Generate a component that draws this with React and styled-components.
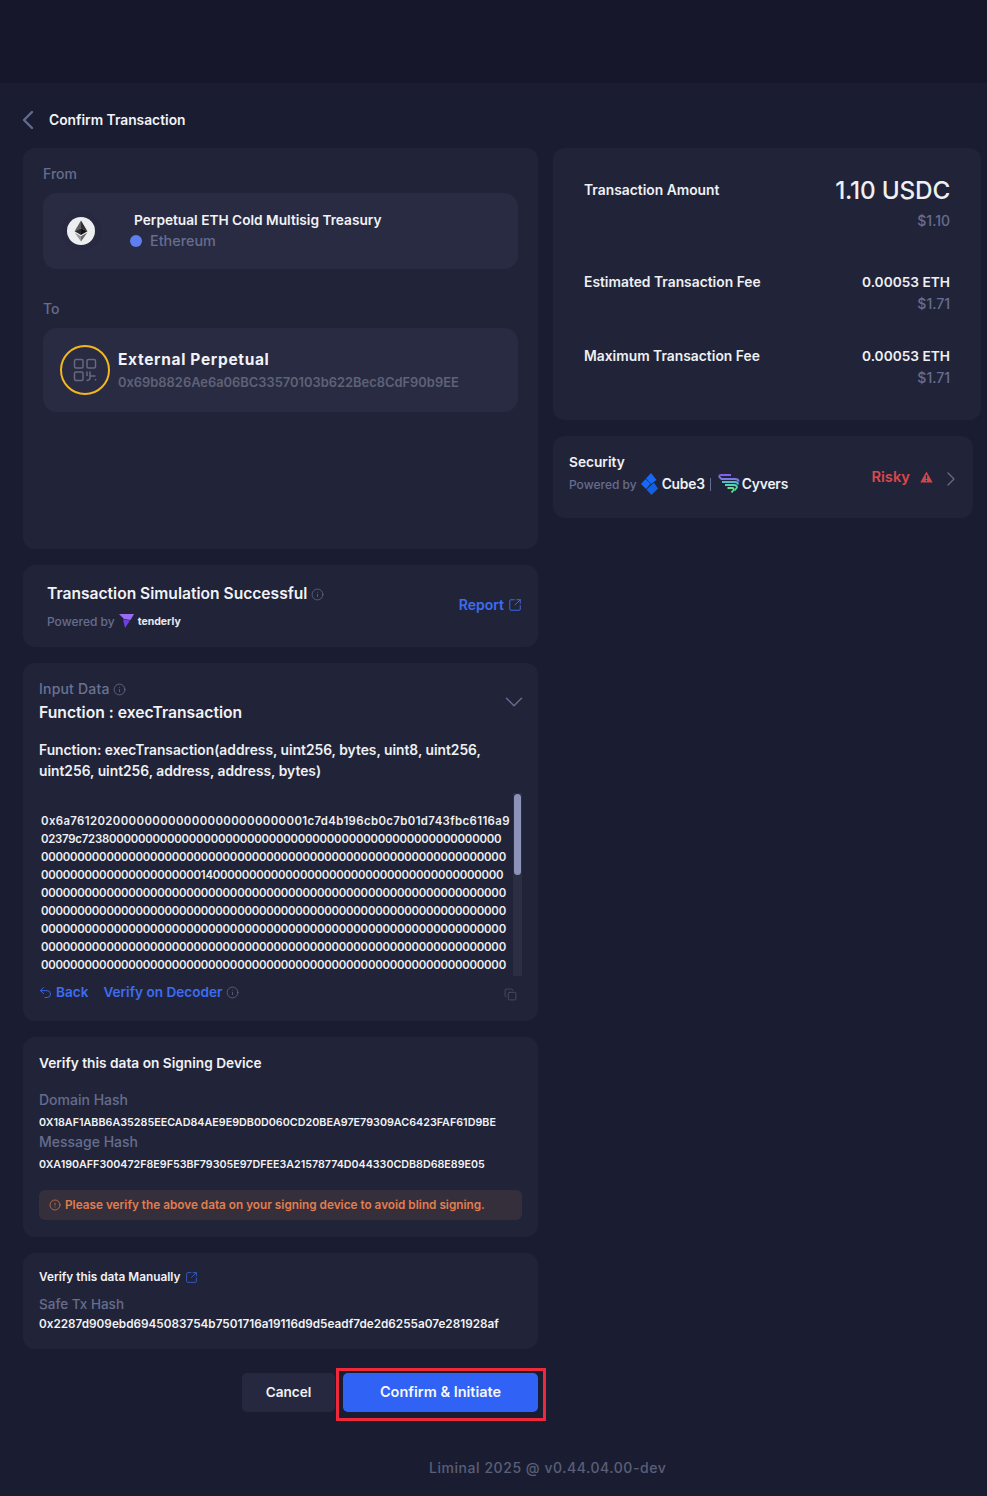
import React from 'react'
import styled, { createGlobalStyle } from 'styled-components'
import { ChevronLeft, ChevronDown, ChevronRight, Info, SquareArrowOutUpRight, Undo2, Copy, CircleAlert } from 'lucide-react'

const GlobalStyle = createGlobalStyle`
  * { box-sizing: border-box; }
  html, body { margin: 0; padding: 0; background: #1a1d31; }
  body { font-family: Inter, "Noto Sans", sans-serif; color: #f1f2f5; }
`

const Page = styled.div`
  width: 987px;
  height: 1496px;
  overflow: hidden;
  background: #1a1d31;
`

const TopBar = styled.div`
  height: 83px;
  background: #16172a;
`

const Header = styled.div`
  height: 65px;
  padding: 21px 0 0 12px;
  display: flex;
  align-items: flex-start;
  gap: 5px;
  font-size: 13.8px;
  font-weight: 600;
  line-height: 32px;
  color: #f2f3f6;
  svg { color: #646c8e; }
`

const Main = styled.div`
  display: flex;
  align-items: flex-start;
  gap: 15px;
  padding-left: 23px;
`

const LeftColumn = styled.div`
  width: 515px;
  display: flex;
  flex-direction: column;
  gap: 16px;
`

const RightColumn = styled.div`
  width: 428px;
  display: flex;
  flex-direction: column;
  gap: 16px;
`

const Card = styled.section`
  background: #212439;
  border-radius: 12px;
  height: ${p => p.$h}px;
  padding: ${p => p.$pad || '0 16px'};
`

const FieldLabel = styled.div`
  font-size: ${p => p.$size || 14}px;
  line-height: 20px;
  font-weight: 500;
  color: #666d8e;
  margin-top: ${p => p.$mt || 0}px;
  margin-bottom: ${p => p.$mb || 0}px;
`

const AccountBox = styled.div`
  height: ${p => p.$h}px;
  background: #292b42;
  border-radius: 14px;
  display: flex;
  align-items: center;
  padding-left: ${p => p.$pl}px;
`

const EthHalo = styled.div`
  width: 40px;
  height: 40px;
  border-radius: 50%;
  background: #272940;
  display: flex;
  align-items: center;
  justify-content: center;
  margin-right: 29px;
`

const AccountText = styled.div`
  margin-top: -2px;
`

const AccountName = styled.div`
  font-size: 13.7px;
  line-height: 20px;
  font-weight: 600;
  color: #f1f2f5;
  padding-left: 4px;
`

const ChainRow = styled.div`
  display: flex;
  align-items: center;
  gap: 8px;
  font-size: 14.4px;
  line-height: 20px;
  font-weight: 500;
  color: #666d8e;
  margin-top: 1px;
`

const ChainDot = styled.span`
  width: 12px;
  height: 12px;
  border-radius: 50%;
  background: #5f7ff0;
`

const QrRing = styled.div`
  width: 50px;
  height: 50px;
  border-radius: 50%;
  border: 2px solid #f3b61f;
  display: flex;
  align-items: center;
  justify-content: center;
  margin-right: 8px;
`

const ExternalText = styled.div`
  margin-top: 1px;
`

const ExternalName = styled.div`
  font-size: 15.5px;
  line-height: 22px;
  font-weight: 700;
  letter-spacing: 0.67px;
  color: #f1f2f5;
`

const ExternalAddress = styled.div`
  font-size: 12.9px;
  line-height: 20px;
  font-weight: 600;
  color: #5e6277;
  margin-top: 2px;
`

const AmountRow = styled.div`
  display: flex;
  justify-content: space-between;
  align-items: flex-start;
  margin-bottom: ${p => p.$mb}px;
`

const AmountLabel = styled.div`
  font-size: 13.85px;
  line-height: 20px;
  font-weight: 600;
  color: #eef0f3;
  margin-top: ${p => p.$big ? 7 : 0}px;
`

const AmountValues = styled.div`
  text-align: right;
`

const AmountValue = styled.div`
  font-size: ${p => p.$big ? 24.3 : 13.7}px;
  line-height: ${p => p.$big ? 34 : 20}px;
  font-weight: ${p => p.$big ? 500 : 600};
  letter-spacing: ${p => p.$big ? '-0.2px' : 0};
  color: #eef0f3;
`

const AmountFiat = styled.div`
  font-size: 14px;
  line-height: 20px;
  font-weight: 500;
  color: #666d8e;
  margin-top: ${p => p.$mt}px;
`

const SecurityCard = styled(Card)`
  width: 420px;
  display: flex;
  align-items: center;
  justify-content: space-between;
  padding: 0 10px 0 16px;
`

const SecurityText = styled.div`
  margin-bottom: 6px;
`

const SmallTitle = styled.div`
  font-size: 13.7px;
  line-height: 20px;
  font-weight: 600;
  color: #f1f2f5;
`

const PoweredRow = styled.div`
  display: flex;
  align-items: center;
  font-size: 12px;
  font-weight: 500;
  color: #666d8e;
  height: 24px;
  margin-top: ${p => p.$mt || 0}px;
`

const BrandText = styled.span`
  font-size: 13.8px;
  font-weight: 600;
  color: #eef0f3;
  letter-spacing: -0.2px;
`

const TenderlyText = styled.span`
  font-size: 10.5px;
  font-weight: 700;
  color: #e8e9ee;
`

const BrandDivider = styled.span`
  width: 1px;
  height: 13px;
  background: #666d8e;
  margin: 0 7px 0 5px;
`

const RiskGroup = styled.div`
  display: flex;
  align-items: center;
  font-size: 14.7px;
  font-weight: 600;
  color: #d9484d;
  svg:last-child { color: #646c8e; margin-left: 6px; margin-top: 4px; }
`

const SimCard = styled(Card)`
  display: flex;
  justify-content: space-between;
  align-items: flex-start;
  padding: 19px 16px 0 24px;
`

const SimTitle = styled.div`
  display: flex;
  align-items: center;
  gap: 4px;
  font-size: 15.6px;
  line-height: 20px;
  font-weight: 600;
  color: #f1f2f5;
  svg { color: #646c8e; }
`

const LinkRow = styled.div`
  display: flex;
  align-items: center;
  gap: ${p => p.$gap || 4}px;
  font-size: ${p => p.$size || 13.6}px;
  line-height: 20px;
  font-weight: 600;
  color: #3d6cf2;
  margin-top: ${p => p.$mt || 0}px;
`

const InputHead = styled.div`
  display: flex;
  justify-content: space-between;
  padding-top: 16px;
`

const InputLabel = styled.div`
  display: flex;
  align-items: center;
  gap: 3px;
  font-size: 14px;
  line-height: 20px;
  font-weight: 500;
  letter-spacing: 0.2px;
  color: #6b7294;
`

const FunctionName = styled.div`
  font-size: 15.7px;
  line-height: 24px;
  font-weight: 600;
  color: #f1f2f5;
  margin-top: 2px;
`

const CollapseIcon = styled.div`
  color: #646c8e;
  margin: 8px -7px 0 0;
`

const Signature = styled.div`
  font-size: 13.8px;
  line-height: 21px;
  font-weight: 600;
  color: #eef0f3;
  margin-top: 15px;
`

const HexFrame = styled.div`
  display: flex;
  height: 183px;
  margin-top: 11px;
`

const HexBody = styled.div`
  flex: 1;
  min-width: 0;
  overflow: hidden;
  padding: 19px 0 0 2px;
`

const ScrollTrack = styled.div`
  width: 9px;
  background: #2c2f42;
  padding: 1px;
`

const ScrollThumb = styled.div`
  height: 81px;
  border-radius: 4px;
  background: #8c93b8;
`

const HexLine = styled.div`
  font-size: 11.4px;
  line-height: 18px;
  font-weight: 600;
  white-space: nowrap;
  letter-spacing: ${p => p.$spread}px;
  color: #eef0f3;
`

const InputFooter = styled.div`
  display: flex;
  align-items: center;
  height: 20px;
  margin-top: 6px;
  svg { flex: none; }
`

const FooterLinks = styled.div`
  display: flex;
  align-items: center;
  gap: 15px;
  flex: 1;
`

const BackIcon = styled.span`
  display: flex;
  margin-left: -1px;
`

const MutedIcon = styled.span`
  display: flex;
  color: #646c8e;
`

const CopyIcon = styled.span`
  display: flex;
  color: #4f5570;
  margin: 4px 5px 0 0;
`

const HashValue = styled.div`
  font-size: ${p => p.$size}px;
  line-height: ${p => p.$lh || 20}px;
  font-weight: 600;
  color: #f1f2f5;
  margin-top: ${p => p.$mt || 0}px;
`

const WarningBar = styled.div`
  height: 30px;
  margin-top: 16px;
  padding: 0 0 1px 10px;
  border-radius: 6px;
  background: #352f3c;
  display: flex;
  align-items: center;
  gap: 4px;
  font-size: 11.77px;
  font-weight: 600;
  color: #e17e4f;
`

const ManualTitle = styled.div`
  display: flex;
  align-items: center;
  gap: 5px;
  font-size: 11.8px;
  line-height: 20px;
  font-weight: 600;
  color: #f1f2f5;
  svg { color: #3a63d6; }
`

const Actions = styled.div`
  display: flex;
  justify-content: flex-end;
  align-items: flex-start;
  margin: 3px -8px 0 0;
`

const CancelButton = styled.button`
  width: 93px;
  height: 39px;
  margin-top: 5px;
  padding: 0 0 2px;
  border: 0;
  border-radius: 5px;
  background: #262840;
  font: 600 13.6px Inter, sans-serif;
  color: #f1f2f5;
`

const Highlight = styled.div`
  width: 210px;
  height: 53px;
  margin-left: 1px;
  border: 3px solid #f0283c;
  padding: 2px 5px 6px 4px;
`

const ConfirmButton = styled.button`
  width: 100%;
  height: 39px;
  padding: 0 0 2px;
  border: 0;
  border-radius: 5px;
  background: #2f62f5;
  font: 600 14.5px Inter, sans-serif;
  color: #f6f7fb;
`

const Footer = styled.div`
  margin: 37px 0 0 429px;
  font-size: 14px;
  line-height: 20px;
  font-weight: 500;
  letter-spacing: 0.55px;
  color: #5a5f79;
`

const EthIcon = () => (
  <svg width="28" height="28" viewBox="0 0 28 28">
    <circle cx="14" cy="14" r="14" fill="#eceef0" />
    <path d="M14 3.5 7.6 14.2 14 11.3z" fill="#5e5e62" />
    <path d="M14 3.5 20.4 14.2 14 11.3z" fill="#2e2e31" />
    <path d="M14 11.3 7.6 14.2 14 18z" fill="#2b2b2e" />
    <path d="M14 11.3 20.4 14.2 14 18z" fill="#111113" />
    <path d="M7.6 15.5 14 24.5V19.3z" fill="#98989c" />
    <path d="M20.4 15.5 14 24.5V19.3z" fill="#66666a" />
  </svg>
)

const QrIcon = () => (
  <svg width="24" height="24" viewBox="0 0 24 24" fill="none" stroke="#666a7d" strokeWidth="1.5">
    <rect x="1.500" y="1.500" width="8.500" height="8.500" rx="1.500" />
    <rect x="14" y="1.500" width="8.500" height="8.500" rx="1.500" />
    <rect x="1.500" y="14" width="8.500" height="8.500" rx="1.500" />
    <path d="M14 13.500v4.500M13.500 22.500c2 0 3.500-1 3.500-3v-6M17.500 18h5M22.500 21v1.500" />
  </svg>
)

const RiskTriangle = () => (
  <svg width="13" height="12" viewBox="0 0 13 12" style={{ marginLeft: 10 }}>
    <path d="M6.500 .5 12.700 11.500H.3z" fill="#cf474b" />
    <path d="M6.500 4v4M6.500 9v1.200" stroke="#212439" strokeWidth="1.200" />
  </svg>
)

const Cube3Logo = () => (
  <svg width="17" height="22" viewBox="0 0 17 22" style={{ margin: '0 4px' }}>
    <path d="M10 0 15.500 7 10 11 5 5.500z" fill="#1769f5" />
    <path d="M4.500 6 9.500 11 5 16 0 11z" fill="#1769f5" />
    <path d="M10.500 11.800 13 9.800 17 15.500 10.500 22 5.500 16.500z" fill="#1260e4" />
  </svg>
)

const CyversLogo = () => (
  <svg width="22" height="20" viewBox="0 0 22 20" fill="none" strokeWidth="1.800" style={{ marginRight: 2 }}>
    <path d="M1 2.500C1 1.500 2 1 3 1h10" stroke="#8a5cf0" />
    <path d="M1 2.500 3.500 5H17c2 0 3.500 1 3.800 2.500" stroke="#7a78e8" />
    <path d="M4 8h13c1.500 0 3 1 3.200 2.500" stroke="#55b6d8" />
    <path d="M7 11h9c1.500 0 3 1 3 2.500l-2.500 3" stroke="#4fd8a6" />
    <path d="M9.500 14h5c1 0 1.500 1 1 2l-2 2.500" stroke="#5ee08c" />
  </svg>
)

const TenderlyLogo = () => (
  <svg width="15" height="14" viewBox="0 0 15 14" style={{ margin: '0 4px' }}>
    <path d="M0 0H15L11.500 6 5 5z" fill="#9a6cf5" />
    <path d="M4 5.500 11 6.500 6 14z" fill="#6e3fe0" />
  </svg>
)

const zeros = n => '0'.repeat(n)

const hexLines = [
  { text: '0x6a761202' + zeros(24) + '1c7d4b196cb0c7b01d743fbc6116a9', spread: 0.38 },
  { text: '02379c7238' + zeros(54), spread: -0.25 },
  { text: zeros(64), spread: -0.25 },
  { text: zeros(22) + '14' + zeros(40), spread: -0.25 },
  ...Array.from({ length: 5 }, () => ({ text: zeros(64), spread: -0.25 })),
]

export default function App() {
  return (
    <Page>
      <GlobalStyle />
      <TopBar />
      <Header>
        <ChevronLeft size={32} strokeWidth={1.8} />
        <span>Confirm Transaction</span>
      </Header>
      <Main>
        <LeftColumn>
          <Card $h={401} $pad="16px 20px 0">
            <FieldLabel $mb={9}>From</FieldLabel>
            <AccountBox $h={76} $pl={18}>
              <EthHalo><EthIcon /></EthHalo>
              <AccountText>
                <AccountName>Perpetual ETH Cold Multisig Treasury</AccountName>
                <ChainRow><ChainDot />Ethereum</ChainRow>
              </AccountText>
            </AccountBox>
            <FieldLabel $mt={30} $mb={9}>To</FieldLabel>
            <AccountBox $h={84} $pl={17}>
              <QrRing><QrIcon /></QrRing>
              <ExternalText>
                <ExternalName>External Perpetual</ExternalName>
                <ExternalAddress>0x69b8826Ae6a06BC33570103b622Bec8CdF90b9EE</ExternalAddress>
              </ExternalText>
            </AccountBox>
          </Card>

          <SimCard $h={82}>
            <div>
              <SimTitle>Transaction Simulation Successful <Info size={13} strokeWidth={1.4} /></SimTitle>
              <PoweredRow $mt={5}>Powered by<TenderlyLogo /><TenderlyText>tenderly</TenderlyText></PoweredRow>
            </div>
            <LinkRow $mt={11} $size={14}>Report <SquareArrowOutUpRight size={14} strokeWidth={1.6} /></LinkRow>
          </SimCard>

          <Card $h={358}>
            <InputHead>
              <div>
                <InputLabel>Input Data <Info size={13} strokeWidth={1.4} /></InputLabel>
                <FunctionName>Function : execTransaction</FunctionName>
              </div>
              <CollapseIcon><ChevronDown size={30} strokeWidth={1.2} /></CollapseIcon>
            </InputHead>
            <Signature>
              Function: execTransaction(address, uint256, bytes, uint8, uint256,
              <br />
              uint256, uint256, address, address, bytes)
            </Signature>
            <HexFrame>
              <HexBody>
                {hexLines.map((line, i) => <HexLine key={i} $spread={line.spread}>{line.text}</HexLine>)}
              </HexBody>
              <ScrollTrack><ScrollThumb /></ScrollTrack>
            </HexFrame>
            <InputFooter>
              <FooterLinks>
                <LinkRow $gap={3}><BackIcon><Undo2 size={15} strokeWidth={1.4} /></BackIcon>Back</LinkRow>
                <LinkRow>Verify on Decoder <MutedIcon><Info size={13} strokeWidth={1.4} /></MutedIcon></LinkRow>
              </FooterLinks>
              <CopyIcon><Copy size={13} strokeWidth={1.4} /></CopyIcon>
            </InputFooter>
          </Card>

          <Card $h={200} $pad="16px 16px 0">
            <SmallTitle>Verify this data on Signing Device</SmallTitle>
            <FieldLabel $mt={17}>Domain Hash</FieldLabel>
            <HashValue $size={10.75} $mt={3} $lh={19}>0X18AF1ABB6A35285EECAD84AE9E9DB0D060CD20BEA97E79309AC6423FAF61D9BE</HashValue>
            <FieldLabel>Message Hash</FieldLabel>
            <HashValue $size={10.7} $mt={3} $lh={19}>0XA190AFF300472F8E9F53BF79305E97DFEE3A21578774D044330CDB8D68E89E05</HashValue>
            <WarningBar><CircleAlert size={12} strokeWidth={1.4} />Please verify the above data on your signing device to avoid blind signing.</WarningBar>
          </Card>

          <Card $h={96} $pad="14px 16px 0">
            <ManualTitle>Verify this data Manually <SquareArrowOutUpRight size={13} strokeWidth={1.5} /></ManualTitle>
            <FieldLabel $mt={7} $size={13.5}>Safe Tx Hash</FieldLabel>
            <HashValue $size={11.75}>0x2287d909ebd6945083754b7501716a19116d9d5eadf7de2d6255a07e281928af</HashValue>
          </Card>

          <Actions>
            <CancelButton>Cancel</CancelButton>
            <Highlight><ConfirmButton>Confirm &amp; Initiate</ConfirmButton></Highlight>
          </Actions>
        </LeftColumn>

        <RightColumn>
          <Card $h={272} $pad="25px 31px 0">
            <AmountRow $mb={41}>
              <AmountLabel $big>Transaction Amount</AmountLabel>
              <AmountValues>
                <AmountValue $big>1.10 USDC</AmountValue>
                <AmountFiat $mt={4}>$1.10</AmountFiat>
              </AmountValues>
            </AmountRow>
            <AmountRow $mb={32}>
              <AmountLabel>Estimated Transaction Fee</AmountLabel>
              <AmountValues>
                <AmountValue>0.00053 ETH</AmountValue>
                <AmountFiat $mt={2}>$1.71</AmountFiat>
              </AmountValues>
            </AmountRow>
            <AmountRow $mb={0}>
              <AmountLabel>Maximum Transaction Fee</AmountLabel>
              <AmountValues>
                <AmountValue>0.00053 ETH</AmountValue>
                <AmountFiat $mt={2}>$1.71</AmountFiat>
              </AmountValues>
            </AmountRow>
          </Card>
          <SecurityCard $h={82}>
            <SecurityText>
              <SmallTitle>Security</SmallTitle>
              <PoweredRow>
                Powered by<Cube3Logo /><BrandText>Cube3</BrandText><BrandDivider /><CyversLogo /><BrandText>Cyvers</BrandText>
              </PoweredRow>
            </SecurityText>
            <RiskGroup>Risky<RiskTriangle /><ChevronRight size={24} strokeWidth={1.3} /></RiskGroup>
          </SecurityCard>
        </RightColumn>
      </Main>
      <Footer>Liminal 2025 @ v0.44.04.00-dev</Footer>
    </Page>
  )
}
